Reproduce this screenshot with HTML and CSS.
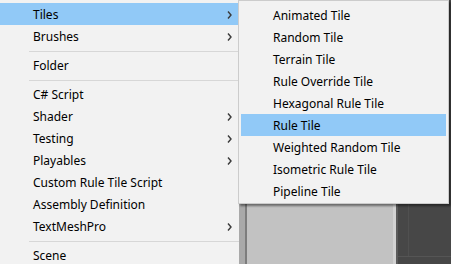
FILE: index.html
```html
<!DOCTYPE html>
<html>
<head>
<meta charset="utf-8">
<link rel="stylesheet" href="styles.css">
</head>
<body>
<div class="screen">
  <div class="menu">
    <div class="item active"><span>Tiles</span><svg class="arrow" width="5" height="8" viewBox="0 0 5 8"><path d="M1 0.5 L4 4 L1 7.5" /></svg></div>
    <div class="item"><span>Brushes</span><svg class="arrow" width="5" height="8" viewBox="0 0 5 8"><path d="M1 0.5 L4 4 L1 7.5" /></svg></div>
    <div class="sep"></div>
    <div class="item"><span>Folder</span></div>
    <div class="sep"></div>
    <div class="item"><span>C# Script</span></div>
    <div class="item"><span>Shader</span><svg class="arrow" width="5" height="8" viewBox="0 0 5 8"><path d="M1 0.5 L4 4 L1 7.5" /></svg></div>
    <div class="item"><span>Testing</span><svg class="arrow" width="5" height="8" viewBox="0 0 5 8"><path d="M1 0.5 L4 4 L1 7.5" /></svg></div>
    <div class="item"><span>Playables</span><svg class="arrow" width="5" height="8" viewBox="0 0 5 8"><path d="M1 0.5 L4 4 L1 7.5" /></svg></div>
    <div class="item"><span>Custom Rule Tile Script</span></div>
    <div class="item"><span>Assembly Definition</span></div>
    <div class="item"><span>TextMeshPro</span><svg class="arrow" width="5" height="8" viewBox="0 0 5 8"><path d="M1 0.5 L4 4 L1 7.5" /></svg></div>
    <div class="sep"></div>
    <div class="item"><span>Scene</span></div>
  </div>
  <div class="editor">
    <div class="edge-a"></div>
    <div class="edge-b"></div>
    <div class="panel"></div>
    <div class="edge-c"></div>
    <div class="edge-d"></div>
    <div class="scene">
      <div class="grid-v"></div>
    </div>
  </div>
  <div class="submenu">
    <div class="item"><span>Animated Tile</span></div>
    <div class="item"><span>Random Tile</span></div>
    <div class="item"><span>Terrain Tile</span></div>
    <div class="item"><span>Rule Override Tile</span></div>
    <div class="item"><span>Hexagonal Rule Tile</span></div>
    <div class="item active"><span>Rule Tile</span></div>
    <div class="item"><span>Weighted Random Tile</span></div>
    <div class="item"><span>Isometric Rule Tile</span></div>
    <div class="item"><span>Pipeline Tile</span></div>
  </div>
</div>
</body>
</html>
```
FILE: styles.css
```css
html, body {
  margin: 0;
  padding: 0;
}
body {
  background: #474747;
  font-family: "Noto Sans", "Liberation Sans", sans-serif;
  font-size: 12px;
  color: #000;
}
.screen {
  position: relative;
  width: 451px;
  height: 264px;
  overflow: hidden;
  display: flex;
}
.menu {
  width: 238px;
  flex: none;
  background: #f2f2f2;
  padding: 3px 1px 0 0;
  display: flex;
  flex-direction: column;
}
.item {
  height: 22px;
  box-sizing: border-box;
  flex: none;
  display: flex;
  align-items: center;
  justify-content: space-between;
  padding: 1px 6px 0 33px;
  line-height: 21px;
  white-space: nowrap;
}
.item.active {
  background: #91c9f7;
}
.arrow {
  display: block;
  fill: none;
  stroke: #3a3a3a;
  stroke-width: 1.4;
}
.sep {
  flex: none;
  height: 1px;
  background: #d7d7d7;
  margin: 4px -1px 2px 29px;
}
.editor {
  flex: 1;
  display: flex;
}
.edge-a { width: 6px; background: #a9a9a9; }
.edge-b { width: 2px; background: #7d7d7d; }
.panel { width: 146px; background: #c2c2c2; }
.edge-c { width: 3px; background: #d2d2d2; }
.edge-d { width: 2px; background: #5b5b5b; }
.scene {
  flex: 1;
  background: #474747;
  position: relative;
  border-bottom: 1px solid #555;
  height: 256px;
}
.grid-v {
  position: absolute;
  left: 10px;
  top: 0;
  bottom: 0;
  width: 1px;
  background: #505050;
}
.submenu {
  position: absolute;
  left: 238px;
  top: 0;
  width: 211px;
  box-sizing: border-box;
  background: #f2f2f2;
  border: 1px solid #cccccc;
  padding: 3px 2px 1px 2px;
  box-shadow: 2px 2px 2px rgba(0, 0, 0, 0.45);
}
.submenu .item {
  padding-left: 32px;
}
```
